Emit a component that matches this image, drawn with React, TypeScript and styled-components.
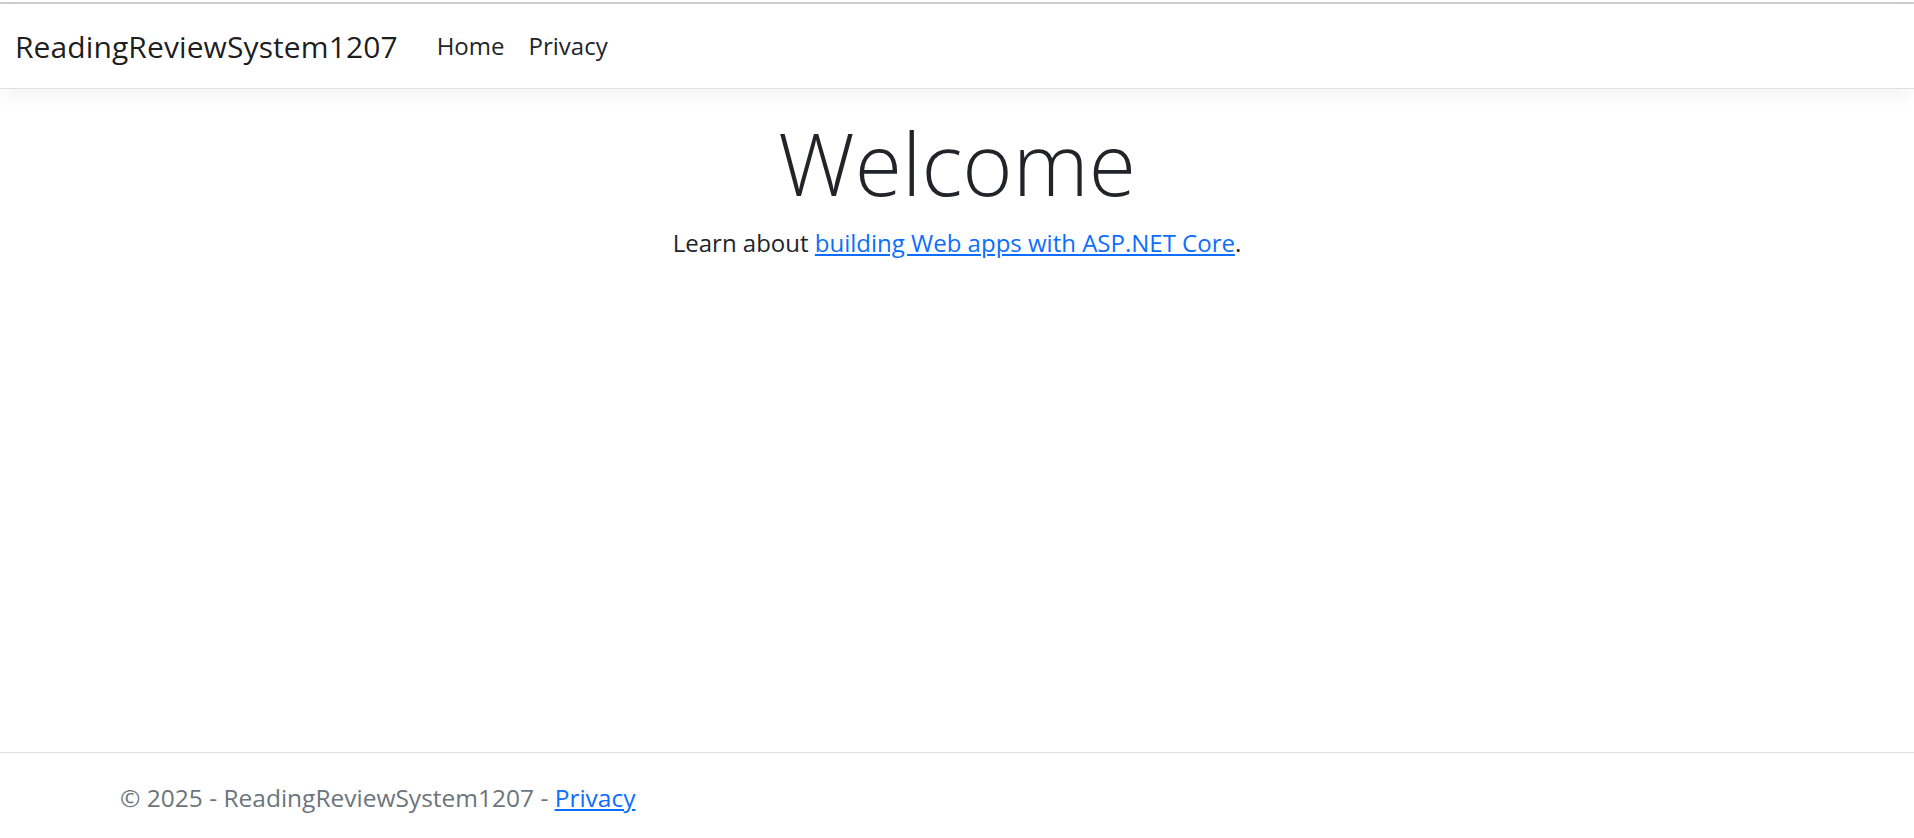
import styled, { createGlobalStyle } from "styled-components";

const GlobalStyle = createGlobalStyle`
  *, *::before, *::after {
    box-sizing: border-box;
  }
  html, body {
    margin: 0;
    padding: 0;
    background: #fff;
  }
  body {
    font-family: "Open Sans", "Noto Sans", sans-serif;
    color: #212529;
    overflow: hidden;
  }
`;

const Page = styled.div`
  display: flex;
  flex-direction: column;
  min-height: 100vh;
  padding-top: 2px;
`;

const TopRule = styled.div`
  height: 2px;
  background: #cfcfcf;
`;

const Navbar = styled.header`
  height: 85px;
  display: flex;
  align-items: center;
  padding: 0 15px;
  background: #fff;
  border-bottom: 1px solid #dee2e6;
  box-shadow: 0 6px 18px rgba(0, 0, 0, 0.05);
`;

const Brand = styled.a`
  font-size: 30px;
  letter-spacing: 0.1px;
  color: rgba(0, 0, 0, 0.9);
  text-decoration: none;
  margin-right: 27px;
  line-height: 1.5;
`;

const NavList = styled.nav`
  display: flex;
  align-items: center;
`;

const NavLink = styled.a`
  font-size: 24px;
  color: #212529;
  text-decoration: none;
  padding: 0 12px;
  line-height: 1.5;
`;

const Main = styled.main`
  flex: 1;
  margin-top: 23px;
  text-align: center;
`;

const Title = styled.h1`
  margin: 0 0 12px;
  font-size: 86px;
  font-weight: 300;
  line-height: 1.18;
`;

const Lead = styled.p`
  margin: 0;
  font-size: 24px;
  line-height: 1.5;
`;

const Link = styled.a`
  color: #0d6efd;
  text-decoration: underline;
`;

const Footer = styled.footer`
  border-top: 1px solid #dee2e6;
  padding-top: 4px;
  line-height: 81px;
  white-space: nowrap;
  color: #6c757d;
  font-size: 24.5px;
`;

const FooterInner = styled.div`
  max-width: 1710px;
  margin: 0 auto;
  padding: 0 18px;
`;

export default function App() {
  return (
    <>
      <GlobalStyle />
      <Page>
        <TopRule />
        <Navbar>
          <Brand href="#">ReadingReviewSystem1207</Brand>
          <NavList>
            <NavLink href="#">Home</NavLink>
            <NavLink href="#">Privacy</NavLink>
          </NavList>
        </Navbar>
        <Main>
          <Title>Welcome</Title>
          <Lead>
            Learn about <Link href="#">building Web apps with ASP.NET Core</Link>.
          </Lead>
        </Main>
        <Footer>
          <FooterInner>
            © 2025 - ReadingReviewSystem1207 - <Link href="#">Privacy</Link>
          </FooterInner>
        </Footer>
      </Page>
    </>
  );
}
